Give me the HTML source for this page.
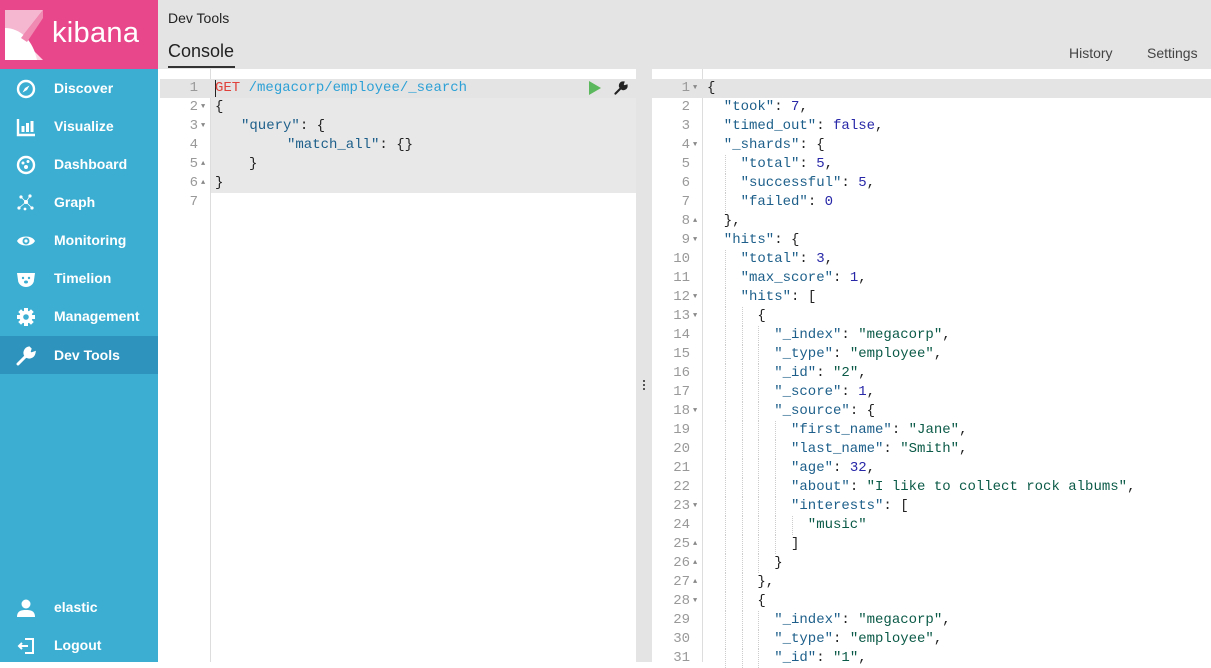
<!DOCTYPE html>
<html><head><meta charset="utf-8"><style>
*{margin:0;padding:0;box-sizing:border-box}
body{width:1211px;height:662px;overflow:hidden;font-family:"Liberation Sans",sans-serif;background:#fff;position:relative}
#side{position:absolute;left:0;top:0;width:158px;height:662px;background:#3caed2}
#logo{position:absolute;left:0;top:0;width:158px;height:69px;background:#e8488b}
#logo span{position:absolute;left:52px;top:17px;color:#fff;font-size:29px;letter-spacing:.3px}
.nav{position:absolute;left:0;width:158px;height:38px;color:#fff;font-size:14px;font-weight:bold}
.nav.act{background:#2e94bd}
.nav span{position:absolute;left:54px;top:11px}
.nav svg{position:absolute;left:16px;top:10px}
#top{position:absolute;left:158px;top:0;width:1053px;height:69px;background:#e4e4e4}
#top .t{position:absolute;left:10px;top:10px;font-size:14px;color:#222}
#top .c{position:absolute;left:10px;top:41px;font-size:18px;color:#222}
#top .u{position:absolute;left:10px;top:66px;width:67px;height:2px;background:#333}
#top .r{position:absolute;top:45px;font-size:14px;color:#444}
.ed{position:absolute;top:79px;font-family:"Liberation Mono",monospace;font-size:14px;line-height:19px}
.ln{position:absolute;height:19px;white-space:pre;color:#222}
.num{position:absolute;width:38px;text-align:right;color:#999;height:19px}
.fm{position:absolute;font-size:7px;line-height:19px;color:#888}
.k{color:#1d5f8a}.s{color:#0b5a47}.n{color:#2727a8}.r1{color:#e0413a}.u1{color:#2da1d6}
#rez{position:absolute;left:636px;top:69px;width:16px;height:593px;background:#e4e4e4}
</style></head><body>
<div id="side">
<div id="logo">
<svg width="40" height="50" style="position:absolute;left:5px;top:10px" viewBox="0 0 40 50">
<polygon points="0,0 38,0 16,28 0,28" fill="#f5b6cf"/>
<polygon points="0,28 16,28 38,50 0,50" fill="#fbd7e6"/>
<path d="M0,18 C15,18 28,30 32,50 L0,50Z" fill="#fff"/>
<polygon points="16,28 38,0 38,8 22,32" fill="#f08ab3"/>
</svg>
<span>kibana</span></div>
<div class="nav" style="top:69px"><svg width="20" height="20" viewBox="0 0 20 20"><circle cx="10" cy="10" r="8" fill="none" stroke="#fff" stroke-width="2.4"/><path d="M13.5 6.5L11 11 6.5 13.5 9 9Z" fill="#fff"/></svg><span>Discover</span></div>
<div class="nav" style="top:107px"><svg width="20" height="20" viewBox="0 0 20 20"><path d="M2 2v16h17" fill="none" stroke="#fff" stroke-width="2.4"/><rect x="5.5" y="9" width="3" height="6" fill="#fff"/><rect x="10" y="6" width="3" height="9" fill="#fff"/><rect x="14.5" y="4" width="3" height="11" fill="#fff"/></svg><span>Visualize</span></div>
<div class="nav" style="top:145px"><svg width="20" height="20" viewBox="0 0 20 20"><circle cx="10" cy="10" r="8" fill="none" stroke="#fff" stroke-width="2.4"/><circle cx="7" cy="8" r="1.5" fill="#fff"/><circle cx="12" cy="6.5" r="1.5" fill="#fff"/><circle cx="10" cy="12" r="2" fill="#fff"/></svg><span>Dashboard</span></div>
<div class="nav" style="top:183px"><svg width="20" height="20" viewBox="0 0 20 20"><g fill="#fff"><circle cx="5" cy="4" r="1.6"/><circle cx="14" cy="3" r="1.6"/><circle cx="10" cy="9" r="2"/><circle cx="3" cy="15" r="1.6"/><circle cx="16" cy="15" r="1.6"/><circle cx="9" cy="16" r="1.4"/></g><path d="M5 4L10 9 14 3M3 15L10 9 16 15" stroke="#fff" stroke-width=".8" fill="none"/></svg><span>Graph</span></div>
<div class="nav" style="top:221px"><svg width="20" height="20" viewBox="0 0 20 20"><path d="M1 10C4 4 16 4 19 10 16 16 4 16 1 10Z" fill="#fff"/><circle cx="10" cy="10" r="3.5" fill="#3caed2"/><circle cx="10" cy="10" r="1.6" fill="#fff"/></svg><span>Monitoring</span></div>
<div class="nav" style="top:259px"><svg width="20" height="20" viewBox="0 0 20 20"><path d="M1 4h18l-1 7c0 4-4 7-8 7s-8-3-8-7Z" fill="#fff"/><circle cx="7" cy="9" r="1.2" fill="#3caed2"/><circle cx="13" cy="9" r="1.2" fill="#3caed2"/><ellipse cx="10" cy="13" rx="2" ry="1.5" fill="#3caed2"/></svg><span>Timelion</span></div>
<div class="nav" style="top:297px"><svg width="20" height="20" viewBox="0 0 20 20"><g fill="#fff"><circle cx="10" cy="10" r="6.5"/><rect x="8" y="1" width="4" height="18"/><rect x="1" y="8" width="18" height="4"/><rect x="8" y="1" width="4" height="18" transform="rotate(45 10 10)"/><rect x="8" y="1" width="4" height="18" transform="rotate(-45 10 10)"/></g><circle cx="10" cy="10" r="2.8" fill="#3caed2"/></svg><span>Management</span></div>
<div class="nav act" style="top:336px"><svg width="20" height="20" viewBox="0 0 20 20"><path d="M2 18L10 10M13 2a5 5 0 0 0-3 8 5 5 0 0 0 8-3l-3 1-2-2 1-3Z" stroke="#fff" stroke-width="3" fill="#fff" stroke-linecap="round"/></svg><span>Dev Tools</span></div>
<div class="nav" style="top:588px"><svg width="20" height="20" viewBox="0 0 20 20"><circle cx="10" cy="6" r="4.5" fill="#fff"/><path d="M1 19c0-6 4-7 9-7s9 1 9 7Z" fill="#fff"/></svg><span>elastic</span></div>
<div class="nav" style="top:626px"><svg width="20" height="20" viewBox="0 0 20 20"><path d="M9 3h8v14H9M12 10H3M6 7l-3 3 3 3" fill="none" stroke="#fff" stroke-width="2"/></svg><span>Logout</span></div>
</div>
<div id="top"><div class="t">Dev Tools</div><div class="c">Console</div><div class="u"></div>
<div class="r" style="left:911px">History</div><div class="r" style="left:989px">Settings</div></div>

<div style="position:absolute;left:210px;top:69px;width:1px;height:593px;background:#ddd"></div>
<div style="position:absolute;left:160px;top:79px;width:476px;height:19px;background:#e4e4e4"></div>
<div style="position:absolute;left:211px;top:98px;width:425px;height:95px;background:#e8e8e8"></div>
<div class="ed" style="left:160px;width:476px">
<div class="num" style="top:0">1</div>
<div class="num" style="top:19px">2</div><div class="fm" style="left:41px;top:19px">▼</div>
<div class="num" style="top:38px">3</div><div class="fm" style="left:41px;top:38px">▼</div>
<div class="num" style="top:57px">4</div>
<div class="num" style="top:76px">5</div><div class="fm" style="left:41px;top:76px">▲</div>
<div class="num" style="top:95px">6</div><div class="fm" style="left:41px;top:95px">▲</div>
<div class="num" style="top:114px">7</div>
<div style="position:absolute;left:55px;top:1px;width:1px;height:17px;background:#222"></div>
<div class="ln" style="left:55px;top:0"><span class="r1">GET</span> <span class="u1">/megacorp/employee/_search</span></div>
<div class="ln" style="left:55px;top:19px">{</div>
<div class="ln" style="left:81px;top:38px"><span class="k">"query"</span>: {</div>
<div class="ln" style="left:127px;top:57px"><span class="k">"match_all"</span>: {}</div>
<div class="ln" style="left:89px;top:76px">}</div>
<div class="ln" style="left:55px;top:95px">}</div>
<svg width="12" height="14" style="position:absolute;left:429px;top:2px"><polygon points="0,0 12,7 0,14" fill="#5cb85c"/></svg>
<svg width="16" height="16" style="position:absolute;left:453px;top:1px" viewBox="0 0 20 20"><path d="M3 17L10 10M13 3a4 4 0 0 0-3 7 4 4 0 0 0 7-3l-3 1-2-2 1-3Z" stroke="#222" stroke-width="2.6" fill="#222" stroke-linecap="round"/></svg>
</div>

<div id="rez"><div style="position:absolute;left:7px;top:311px;width:2px;height:2px;background:#555;box-shadow:0 4px #555,0 8px #555"></div></div>

<div style="position:absolute;left:702px;top:69px;width:1px;height:593px;background:#ddd"></div>
<div style="position:absolute;left:652px;top:79px;width:559px;height:19px;background:#e4e4e4"></div>
<div class="ed" style="left:652px;width:559px" id="r"></div>
<script>
var L=[
[0,'{'],[1,'<span class="k">"took"</span>: <span class="n">7</span>,'],[1,'<span class="k">"timed_out"</span>: <span class="n">false</span>,'],[1,'<span class="k">"_shards"</span>: {',1],
[2,'<span class="k">"total"</span>: <span class="n">5</span>,'],[2,'<span class="k">"successful"</span>: <span class="n">5</span>,'],[2,'<span class="k">"failed"</span>: <span class="n">0</span>'],[1,'},',2],
[1,'<span class="k">"hits"</span>: {',1],[2,'<span class="k">"total"</span>: <span class="n">3</span>,'],[2,'<span class="k">"max_score"</span>: <span class="n">1</span>,'],[2,'<span class="k">"hits"</span>: [',1],
[3,'{',1],[4,'<span class="k">"_index"</span>: <span class="s">"megacorp"</span>,'],[4,'<span class="k">"_type"</span>: <span class="s">"employee"</span>,'],[4,'<span class="k">"_id"</span>: <span class="s">"2"</span>,'],
[4,'<span class="k">"_score"</span>: <span class="n">1</span>,'],[4,'<span class="k">"_source"</span>: {',1],[5,'<span class="k">"first_name"</span>: <span class="s">"Jane"</span>,'],[5,'<span class="k">"last_name"</span>: <span class="s">"Smith"</span>,'],
[5,'<span class="k">"age"</span>: <span class="n">32</span>,'],[5,'<span class="k">"about"</span>: <span class="s">"I like to collect rock albums"</span>,'],[5,'<span class="k">"interests"</span>: [',1],[6,'<span class="s">"music"</span>'],
[5,']',2],[4,'}',2],[3,'},',2],[3,'{',1],[4,'<span class="k">"_index"</span>: <span class="s">"megacorp"</span>,'],[4,'<span class="k">"_type"</span>: <span class="s">"employee"</span>,'],[4,'<span class="k">"_id"</span>: <span class="s">"1"</span>,']];
L[0][2]=1;
var h='';
L.forEach(function(l,i){var t=i*19;
h+='<div class="num" style="top:'+t+'px">'+(i+1)+'</div>';
if(l[2])h+='<div class="fm" style="left:41px;top:'+t+'px">'+(l[2]==1?'▼':'▲')+'</div>';
for(var j=1;j<l[0];j++)h+='<div style="position:absolute;left:'+(55+j*16.8+1)+'px;top:'+t+'px;height:19px;border-left:1px dotted #ccc"></div>';
h+='<div class="ln" style="left:'+(55+l[0]*16.8)+'px;top:'+t+'px">'+l[1]+'</div>';});
document.getElementById('r').innerHTML=h;
</script>
</body></html>
